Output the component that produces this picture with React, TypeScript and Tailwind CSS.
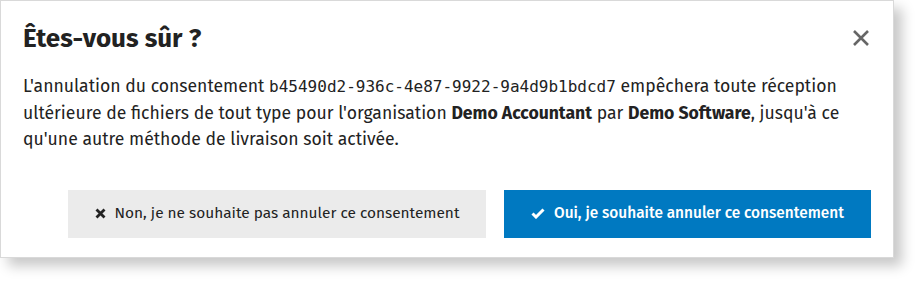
import React from "react";

const CloseIcon = () => (
  <svg width="18" height="18" viewBox="0 0 18 18" fill="none">
    <path d="M2 2 L16 16 M16 2 L2 16" stroke="#666666" strokeWidth="2.6" strokeLinecap="butt" />
  </svg>
);

const SmallX = () => (
  <svg width="11" height="11" viewBox="0 0 11 11">
    <path d="M1.5 1.5 L9.5 9.5 M9.5 1.5 L1.5 9.5" stroke="#222222" strokeWidth="2.8" />
  </svg>
);

const Check = () => (
  <svg width="14" height="11" viewBox="0 0 14 11">
    <path d="M1.5 5.5 L5 9 L12.5 1.5" stroke="#ffffff" strokeWidth="3" fill="none" />
  </svg>
);

const App = () => {
  return (
    <div className="bg-white w-[917px] h-[281px] font-['Fira_Sans','Open_Sans',sans-serif]">
      <div className="w-[894px] h-[258px] border border-[#d9d9d9] bg-white shadow-[8px_8px_12px_rgba(0,0,0,0.22)] px-[22px] pt-[21px] flex flex-col">
        <div className="flex justify-between items-start">
          <h1 className="text-[26px] font-bold text-[#222] leading-[34px]">Êtes-vous sûr ?</h1>
          <button className="mt-[7px] mr-[1px]">
            <CloseIcon />
          </button>
        </div>
        <p className="mt-[18px] text-[17.6px] leading-[26.5px] text-[#222]">
          L'annulation du consentement{" "}
          <span className="font-['DejaVu_Sans_Mono',monospace] text-[16px]">
            b45490d2-936c-4e87-9922-9a4d9b1bdcd7
          </span>{" "}
          empêchera toute réception ultérieure de fichiers de tout type pour l'organisation{" "}
          <span className="font-bold">Demo Accountant</span> par{" "}
          <span className="font-bold">Demo Software</span>, jusqu'à ce qu'une autre méthode de
          livraison soit activée.
        </p>
        <div className="mt-[36px] flex justify-end gap-[18px]">
          <button className="h-[48px] w-[418px] bg-[#ebebeb] text-[#222] text-[15.4px] flex items-center justify-center gap-[9px]">
            <SmallX />
            Non, je ne souhaite pas annuler ce consentement
          </button>
          <button className="h-[48px] w-[367px] bg-[#0079c1] text-white text-[15.4px] font-medium flex items-center justify-center gap-[9px]">
            <Check />
            Oui, je souhaite annuler ce consentement
          </button>
        </div>
      </div>
    </div>
  );
};

export default App;
